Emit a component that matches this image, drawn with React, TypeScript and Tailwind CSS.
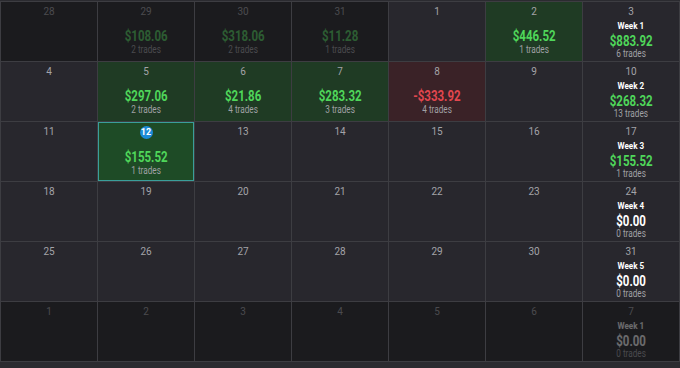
import React from "react";

type Day = {
  day: number;
  outside?: boolean;
  pnl?: number;
  trades?: number;
  week?: { label: string; pnl: number; trades: number };
  selected?: boolean;
};

const weeks: Day[][] = [
  [
    { day: 28, outside: true },
    { day: 29, outside: true, pnl: 108.06, trades: 2 },
    { day: 30, outside: true, pnl: 318.06, trades: 2 },
    { day: 31, outside: true, pnl: 11.28, trades: 1 },
    { day: 1 },
    { day: 2, pnl: 446.52, trades: 1 },
    { day: 3, week: { label: "Week 1", pnl: 883.92, trades: 6 } },
  ],
  [
    { day: 4 },
    { day: 5, pnl: 297.06, trades: 2 },
    { day: 6, pnl: 21.86, trades: 4 },
    { day: 7, pnl: 283.32, trades: 3 },
    { day: 8, pnl: -333.92, trades: 4 },
    { day: 9 },
    { day: 10, week: { label: "Week 2", pnl: 268.32, trades: 13 } },
  ],
  [
    { day: 11 },
    { day: 12, pnl: 155.52, trades: 1, selected: true },
    { day: 13 },
    { day: 14 },
    { day: 15 },
    { day: 16 },
    { day: 17, week: { label: "Week 3", pnl: 155.52, trades: 1 } },
  ],
  [
    { day: 18 },
    { day: 19 },
    { day: 20 },
    { day: 21 },
    { day: 22 },
    { day: 23 },
    { day: 24, week: { label: "Week 4", pnl: 0, trades: 0 } },
  ],
  [
    { day: 25 },
    { day: 26 },
    { day: 27 },
    { day: 28 },
    { day: 29 },
    { day: 30 },
    { day: 31, week: { label: "Week 5", pnl: 0, trades: 0 } },
  ],
  [
    { day: 1, outside: true },
    { day: 2, outside: true },
    { day: 3, outside: true },
    { day: 4, outside: true },
    { day: 5, outside: true },
    { day: 6, outside: true },
    { day: 7, outside: true, week: { label: "Week 1", pnl: 0, trades: 0 } },
  ],
];

const money = (v: number) =>
  (v < 0 ? "-$" : "$") + Math.abs(v).toFixed(2);

function Cell({ d }: { d: Day }) {
  let bg = "bg-[#28272d]";
  if (d.outside) bg = "bg-[#1b1b1e]";
  else if (d.selected) bg = "bg-[#1e4b26] border border-[#3a9e9a]";
  else if (d.pnl !== undefined && d.pnl < 0) bg = "bg-[#3a2227]";
  else if (d.pnl !== undefined && !d.week) bg = "bg-[#1f3b24]";

  return (
    <div className={`h-[59px] ${bg} flex flex-col items-center`}>
      <div className={`flex flex-col items-center w-full ${d.outside ? "opacity-35" : ""}`}>
        {d.selected ? (
          <div className="mt-[3px] w-[13px] h-[13px] rounded-full bg-[#1c8bd8] text-white text-[9px] font-bold leading-[13px] text-center">
            {d.day}
          </div>
        ) : (
          <div className="mt-[4px] text-[10px] leading-[12px] text-[#a3a3a8]">{d.day}</div>
        )}

        {d.week ? (
          <>
            <div className="mt-[3px] text-[9px] leading-[10px] font-bold text-white scale-x-90">
              {d.week.label}
            </div>
            <div
              className={`mt-[3px] text-[14px] leading-[14px] font-bold scale-x-[0.82] ${
                d.week.pnl > 0 ? "text-[#4fd65a]" : "text-white"
              }`}
            >
              {money(d.week.pnl)}
            </div>
            <div className="text-[10px] leading-[10px] mt-[1px] text-[#a0a0a5] scale-x-[0.82]">
              {d.week.trades} trades
            </div>
          </>
        ) : d.pnl !== undefined ? (
          <>
            <div
              className={`mt-[11px] text-[14px] leading-[14px] font-bold scale-x-[0.82] ${
                d.pnl < 0 ? "text-[#e2474f]" : "text-[#4fd65a]"
              }`}
            >
              {money(d.pnl)}
            </div>
            <div className="mt-[2px] text-[10px] leading-[10px] text-[#a0a0a5] scale-x-[0.82]">
              {d.trades} trades
            </div>
          </>
        ) : null}
      </div>
    </div>
  );
}

export default function App() {
  return (
    <div
      className="w-[680px] h-[368px] bg-[#2b2b30] overflow-hidden"
      style={{ fontFamily: "Roboto, 'Noto Sans', sans-serif" }}
    >
      <div className="mt-[1px] grid grid-cols-7 gap-px p-px bg-[#3d3d42]">
        {weeks.flat().map((d, i) => (
          <Cell key={i} d={d} />
        ))}
      </div>
    </div>
  );
}
